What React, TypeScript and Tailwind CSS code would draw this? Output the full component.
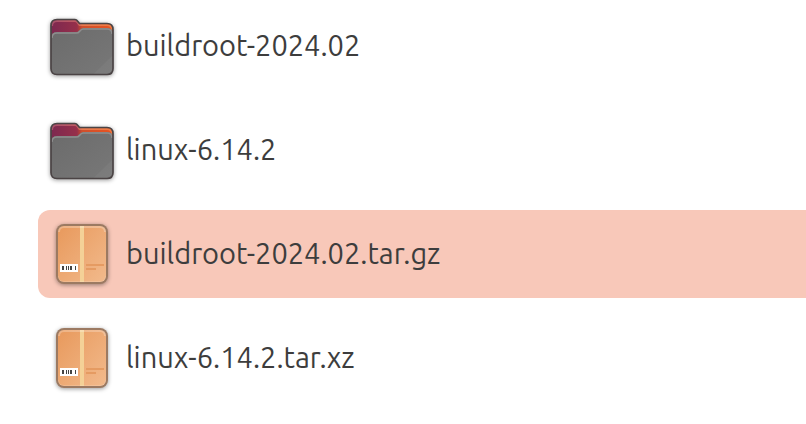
import clsx from "clsx";

interface FileEntry {
  name: string;
  type: "folder" | "archive";
  selected?: boolean;
}

const files: FileEntry[] = [
  { name: "buildroot-2024.02", type: "folder" },
  { name: "linux-6.14.2", type: "folder" },
  { name: "buildroot-2024.02.tar.gz", type: "archive", selected: true },
  { name: "linux-6.14.2.tar.xz", type: "archive" },
];

const FolderIcon = () => (
  <svg viewBox="0 0 64 64" className="size-16 shrink-0 overflow-visible drop-shadow-[0_1px_2px_rgba(0,0,0,0.4)]" aria-hidden="true">
    <defs>
      <linearGradient id="folder-back" x1="0" y1="0" x2="1" y2="0">
        <stop offset="0" stopColor="#7c2850" />
        <stop offset="0.42" stopColor="#96304a" />
        <stop offset="0.5" stopColor="#cf4f2c" />
        <stop offset="1" stopColor="#e95420" />
      </linearGradient>
      <linearGradient id="folder-edge" x1="0" y1="0" x2="1" y2="0">
        <stop offset="0" stopColor="#a8506a" />
        <stop offset="0.42" stopColor="#c05a62" />
        <stop offset="0.5" stopColor="#e8794f" />
        <stop offset="1" stopColor="#f07a42" />
      </linearGradient>
      <linearGradient id="folder-front" x1="0" y1="0" x2="1" y2="1">
        <stop offset="0" stopColor="#6b6b6b" />
        <stop offset="1" stopColor="#787878" />
      </linearGradient>
    </defs>
    <path d="M7 5.500H25Q26.500 5.500 27.500 7L29.500 9.500H57Q63 9.500 63 15.500V54.500Q63 60.500 57 60.500H7Q1 60.500 1 54.500V11.500Q1 5.500 7 5.500Z" fill="url(#folder-back)" />
    <path d="M2 12Q2 7 7 7H25Q26.500 7 27.500 8.500L29.500 11H57Q62 11 62 16" fill="none" stroke="url(#folder-edge)" strokeWidth="2" />
    <path d="M1 24Q1 18 7 18H26Q28 18 29 16.500Q31 14 33 14H57Q63 14 63 20V54.500Q63 60.500 57 60.500H7Q1 60.500 1 54.500Z" fill="url(#folder-front)" />
    <path d="M63 41V54.500Q63 60.500 57 60.500H43Z" fill="#fff" fillOpacity=".04" />
    <path d="M2 24Q2 19 7 19H26Q28.500 19 29.500 17.500Q31.500 15 33 15H57Q62 15 62 20" fill="none" stroke="#8e8e8e" strokeWidth="1.500" />
    <path d="M7 5.500H25Q26.500 5.500 27.500 7L29.500 9.500H57Q63 9.500 63 15.500V54.500Q63 60.500 57 60.500H7Q1 60.500 1 54.500V11.500Q1 5.500 7 5.500Z" fill="none" stroke="#4b4445" strokeWidth="1.700" />
  </svg>
);

const ArchiveIcon = () => (
  <svg viewBox="0 0 64 64" className="size-16 shrink-0 overflow-visible drop-shadow-[0_1px_2px_rgba(0,0,0,0.4)]" aria-hidden="true">
    <defs>
      <linearGradient id="archive-box" x1="0" y1="0" x2="1" y2="1">
        <stop offset="0" stopColor="#e8995c" />
        <stop offset="1" stopColor="#f2ba8c" />
      </linearGradient>
    </defs>
    <rect x="6" y="2" width="52" height="60" rx="8" fill="#9c7a62" />
    <rect x="8" y="4" width="48" height="56" rx="6" fill="url(#archive-box)" />
    <path d="M30 4h4v56h-4z" fill="#f4d197" />
    <path d="M9 10Q9 5 14 5H50Q55 5 55 10" fill="none" stroke="#fff" strokeOpacity=".25" strokeWidth="2" />
    <path d="M8.500 54Q8.500 59.500 14 59.500H50Q55.500 59.500 55.500 54" fill="none" stroke="#fff" strokeOpacity=".15" />
    <path d="M10 42h18v8H10z" fill="#fff" />
    <path d="M12 44h2v4h-2zM16 44h1v4h-1zM18 44h1v4h-1zM20 44h2v4h-2zM25 44h1v4h-1z" fill="#454545" />
    <path d="M36 42h18v2H36zM36 46h10v2H36z" fill="#e59b62" />
  </svg>
);

const FileRow = ({ name, type, selected }: FileEntry) => {
  return (
    <li>
      <button
        type="button"
        aria-pressed={!!selected}
        className={clsx(
          "flex w-full items-center gap-3 rounded-l-xl py-3 pl-3 text-left",
          selected && "bg-[#f8c8b9]"
        )}
      >
        {type === "folder" ? <FolderIcon /> : <ArchiveIcon />}
        <span className="pb-0.5 text-[29px] leading-9 whitespace-nowrap">{name}</span>
      </button>
    </li>
  );
};

const App = () => {
  return (
    <main className="min-h-screen bg-white pt-0.5 pl-[38px] font-['Ubuntu','Open_Sans','Noto_Sans',sans-serif] text-[#3d3d3d]">
      <ul className="flex flex-col gap-4">
        {files.map((file) => (
          <FileRow key={file.name} {...file} />
        ))}
      </ul>
    </main>
  );
};

export default App;
